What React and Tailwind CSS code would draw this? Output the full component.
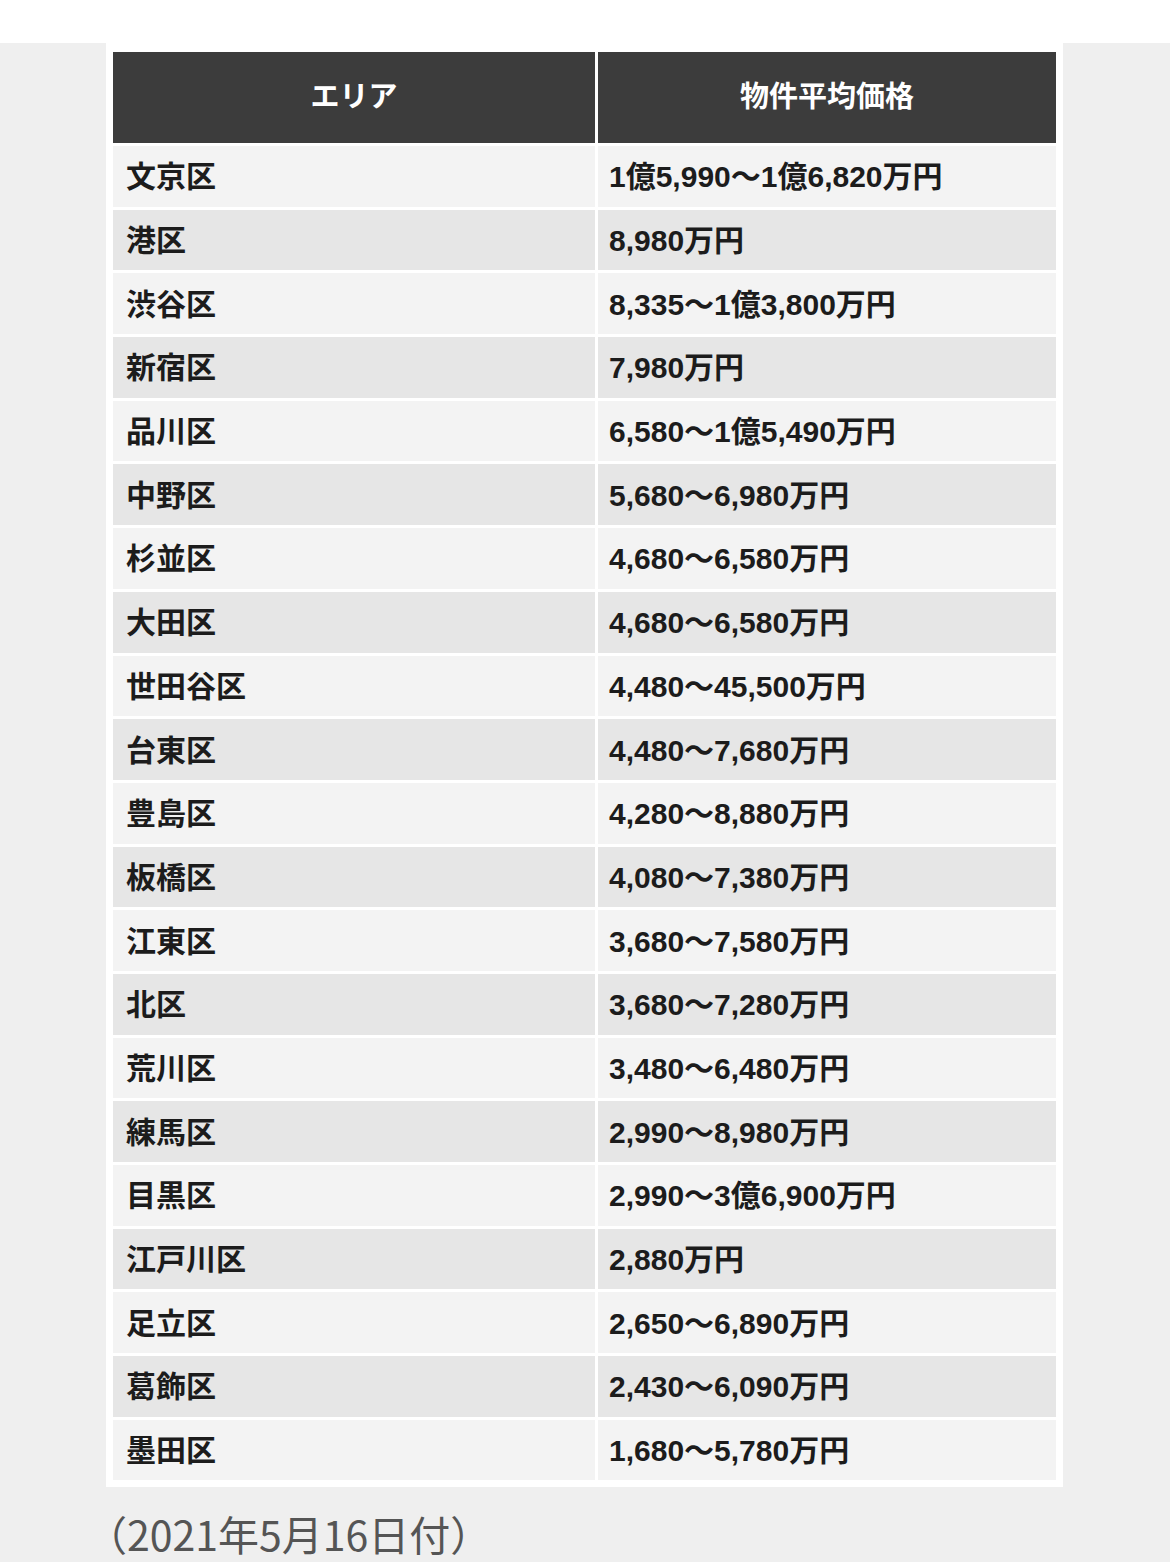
import React from "react";

const rows = [
  ["文京区", "1億5,990～1億6,820万円"],
  ["港区", "8,980万円"],
  ["渋谷区", "8,335～1億3,800万円"],
  ["新宿区", "7,980万円"],
  ["品川区", "6,580～1億5,490万円"],
  ["中野区", "5,680～6,980万円"],
  ["杉並区", "4,680～6,580万円"],
  ["大田区", "4,680～6,580万円"],
  ["世田谷区", "4,480～45,500万円"],
  ["台東区", "4,480～7,680万円"],
  ["豊島区", "4,280～8,880万円"],
  ["板橋区", "4,080～7,380万円"],
  ["江東区", "3,680～7,580万円"],
  ["北区", "3,680～7,280万円"],
  ["荒川区", "3,480～6,480万円"],
  ["練馬区", "2,990～8,980万円"],
  ["目黒区", "2,990～3億6,900万円"],
  ["江戸川区", "2,880万円"],
  ["足立区", "2,650～6,890万円"],
  ["葛飾区", "2,430～6,090万円"],
  ["墨田区", "1,680～5,780万円"],
];

export default function App() {
  return (
    <div className="min-h-[1562px] bg-[#efefef] font-['Liberation_Sans','Noto_Sans_CJK_JP',sans-serif]">
      <div className="h-[43px] bg-white" />
      <div className="ml-[106px] w-[957px] bg-white px-[7px] pt-[9px] pb-[7px]">
        <div className="grid grid-cols-[482px_458px] gap-x-[3px] gap-y-[3px]">
          <div className="flex h-[91px] items-center justify-center bg-[#3c3c3c] text-[29px] font-bold text-white">
            エリア
          </div>
          <div className="flex h-[91px] items-center justify-center bg-[#3c3c3c] text-[29px] font-bold text-white">
            物件平均価格
          </div>
          {rows.map(([area, price], i) => (
            <React.Fragment key={area}>
              <div
                className={`flex h-[60.7px] items-center pl-[13px] pt-[1px] text-[30px] font-bold text-[#1c1c1c] ${
                  i % 2 === 0 ? "bg-[#f3f3f3]" : "bg-[#e6e6e6]"
                }`}
              >
                {area}
              </div>
              <div
                className={`flex h-[60.7px] items-center pl-[11px] pt-[1px] text-[30px] font-bold text-[#1c1c1c] ${
                  i % 2 === 0 ? "bg-[#f3f3f3]" : "bg-[#e6e6e6]"
                }`}
              >
                {price}
              </div>
            </React.Fragment>
          ))}
        </div>
      </div>
      <p className="ml-[86px] mt-[26px] text-[41px] leading-[40px] text-[#555555] font-['Noto_Sans_CJK_JP',sans-serif]">
        （2021年5月16日付）
      </p>
    </div>
  );
}
